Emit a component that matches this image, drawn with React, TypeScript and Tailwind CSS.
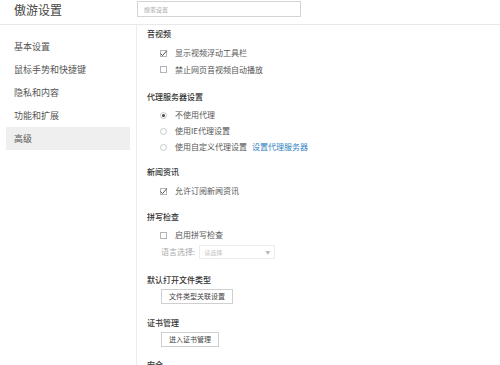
import React from "react";

const sideItems = ["基本设置", "鼠标手势和快捷键", "隐私和内容", "功能和扩展", "高级"];

function CheckBox({ checked }: { checked?: boolean }) {
  return (
    <span className="w-[7px] h-[7px] border border-[#b5b5b5] bg-white flex items-center justify-center shrink-0">
      {checked && (
        <svg width="7" height="7" viewBox="0 0 7 7" className="overflow-visible">
          <polyline points="0.5,3.5 2.6,5.6 6.8,0.6" fill="none" stroke="#555" strokeWidth="1" />
        </svg>
      )}
    </span>
  );
}

function Radio({ checked }: { checked?: boolean }) {
  return (
    <span className="w-[7px] h-[7px] rounded-full border border-[#c8c8c8] bg-white flex items-center justify-center shrink-0">
      {checked && <span className="w-[3px] h-[3px] rounded-full bg-[#444]" />}
    </span>
  );
}

function Heading({ children, className = "" }: { children: React.ReactNode; className?: string }) {
  return (
    <div className={`h-[14px] flex items-center text-[8px] font-medium text-[#333] ${className}`}>
      {children}
    </div>
  );
}

function Row({ children, className = "" }: { children: React.ReactNode; className?: string }) {
  return (
    <div className={`h-[16px] flex items-center pl-[13px] text-[8px] text-[#555] ${className}`}>
      {children}
    </div>
  );
}

export default function App() {
  return (
    <div
      className="w-[500px] h-[365px] overflow-hidden bg-white flex flex-col"
      style={{ fontFamily: '"Noto Sans CJK SC", "Noto Sans", sans-serif' }}
    >
      {/* header */}
      <header className="h-[25px] shrink-0 border-b border-[#e8e8e8] flex items-start">
        <div className="w-[137px] pl-[14px] pt-[2px] text-[12px] leading-[16px] text-[#444]">傲游设置</div>
        <div className="mt-[1px] w-[164px] h-[16px] border border-[#d4d4d4] flex items-center pl-[6px] text-[6px] text-[#aaa]">
          搜索设置
        </div>
      </header>

      <div className="flex flex-1 min-h-0">
        {/* sidebar */}
        <nav className="w-[137px] shrink-0 border-r border-[#ececec] pt-[10px] pl-[6px] pr-[6px]">
          {sideItems.map((item) => (
            <div
              key={item}
              className={`h-[23px] flex items-center pl-[8px] text-[9px] text-[#555] ${
                item === "高级" ? "bg-[#efefef]" : ""
              }`}
            >
              {item}
            </div>
          ))}
        </nav>

        {/* content */}
        <main className="flex-1 pl-[10px] pt-[2px]">
          <Heading>音视频</Heading>
          <Row className="mt-[4px]">
            <CheckBox checked />
            <span className="ml-[8px]">显示视频浮动工具栏</span>
          </Row>
          <Row className="h-[17px]">
            <CheckBox />
            <span className="ml-[8px]">禁止网页音视频自动播放</span>
          </Row>

          <Heading className="mt-[11px] h-[16px]">代理服务器设置</Heading>
          <Row className="mt-[2px]">
            <Radio checked />
            <span className="ml-[8px]">不使用代理</span>
          </Row>
          <Row>
            <Radio />
            <span className="ml-[8px]">使用IE代理设置</span>
          </Row>
          <Row>
            <Radio />
            <span className="ml-[8px]">使用自定义代理设置</span>
            <span className="ml-[5px] text-[#2f7fc1]">设置代理服务器</span>
          </Row>

          <Heading className="mt-[10px]">新闻资讯</Heading>
          <Row className="mt-[4px]">
            <CheckBox checked />
            <span className="ml-[8px]">允许订阅新闻资讯</span>
          </Row>

          <Heading className="mt-[11px]">拼写检查</Heading>
          <Row className="mt-[3px]">
            <CheckBox />
            <span className="ml-[8px]">启用拼写检查</span>
          </Row>
          <Row className="mt-[1px] pl-[14px]">
            <span className="text-[#aaa]">语言选择:</span>
            <div className="ml-[4px] w-[76px] h-[14px] border border-[#ececec] flex items-center justify-between pl-[4px] pr-[4px] text-[6px] text-[#c4c4c4]">
              <span>请选择</span>
              <span className="text-[5px] text-[#bbb]">▼</span>
            </div>
          </Row>

          <Heading className="mt-[13px]">默认打开文件类型</Heading>
          <div className="mt-[2px] ml-[14px] w-[72px] h-[15px] border border-[#cfcfcf] flex items-center justify-center text-[7px] text-[#444]">
            文件类型关联设置
          </div>

          <Heading className="mt-[12px]">证书管理</Heading>
          <div className="mt-[2px] ml-[14px] w-[58px] h-[15px] border border-[#cfcfcf] flex items-center justify-center text-[7px] text-[#444]">
            进入证书管理
          </div>

          <Heading className="mt-[11px]">安全</Heading>
        </main>
      </div>
    </div>
  );
}
